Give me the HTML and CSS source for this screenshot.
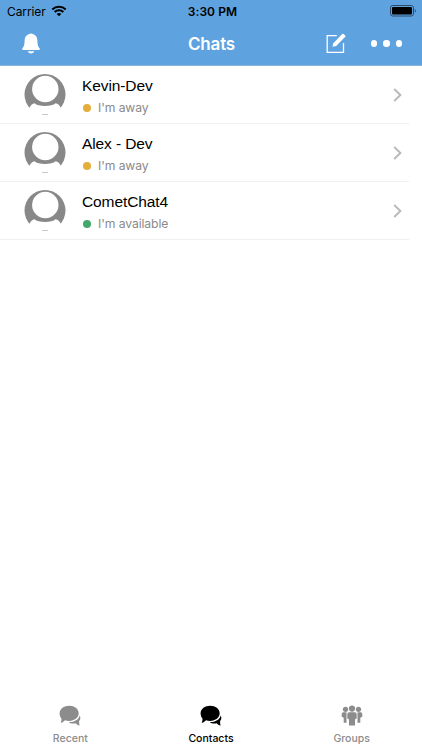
FILE: index.html
```
<!DOCTYPE html>
<html lang="en">
  <head>
    <meta charset="utf-8">
    <title>Chats</title>
    <link rel="stylesheet" href="styles.css">
  </head>
  <body>
    <!-- shared icons -->
    <svg class="defs" width="0" height="0">
      <symbol id="avatar" viewBox="0 0 42 42">
        <circle cx="21" cy="20.5" r="20.5" fill="#888" />
        <circle cx="21.3" cy="15" r="13.2" fill="#fff" />
        <path d="M0 42 L5.2 34.2 C6.5 31.500 8.500 29.500 10.500 29.300 C14 32.800 28 32.800 31.500 29.300 C34 29.500 35.800 31.500 37 34.200 L42 42Z" fill="#fff" />
        <path d="M18 40.500h6" stroke="#bbb" stroke-width=".8" />
      </symbol>
      <symbol id="arrow" viewBox="0 0 10 14">
        <path d="M1.200 1 L7.400 7 L1.200 13" fill="none" stroke="#b9b9bd" stroke-width="1.900" />
      </symbol>
      <symbol id="bubbles" viewBox="0 0 22 21">
        <path d="M10.200.8C15.400.8 19.700 3.900 19.700 8.300s-4.300 7.600-9.500 7.600c-1.600 0-3-.2-4.200-.6-1 1.200-2.200 2.200-4.300 2.600.6-1.300.9-2.700.8-4.400C1.300 12.200.6 10.400.6 8.300.6 3.900 5 .8 10.200.8z" />
        <path d="M20.700 10.400c.6.900.7 1.800.6 2.800-.1 1.300-.6 2.200-1.200 2.900-.1 1.700.1 3.200.5 4.500-1.800-.4-3-1.200-3.900-2.300-3 .5-5.400.1-7-1.300 5.200.3 10-2.300 11-6.600z" />
      </symbol>
    </svg>

    <header>
      <div class="status">
        <div class="carrier">
          <span>Carrier</span>
          <svg width="16" height="12" viewBox="0 0 16 12">
            <path d="M1.300 4.500C5 .9 11 .9 14.700 4.500M3.700 7c2.400-2.300 6.200-2.300 8.600 0" fill="none" stroke="#000" stroke-width="2.100" />
            <path d="M8 11.200 L5.700 8.900 C7 7.800 9 7.800 10.300 8.900Z" />
          </svg>
        </div>
        <div class="time">3:30 PM</div>
        <svg class="battery" width="27" height="12" viewBox="0 0 27 12">
          <rect x=".5" y=".5" width="23" height="10.500" rx="2.200" fill="none" stroke="#2c4a68" />
          <rect x="2" y="2" width="20" height="7.500" rx="1" />
          <path d="M24.800 4v3.600c1.400-.4 1.400-3.200 0-3.600z" fill="#2c4a68" />
        </svg>
      </div>
      <div class="navbar">
        <svg class="bell" width="20" height="22" viewBox="0 0 20 22">
          <path d="M10 .5c.8 0 1.500.2 1.800.6 3.200.9 4.500 3.300 4.600 6.400.1 4.800.8 6.200 2.200 7.800.6.700.3 1.700-.8 1.700H2.200c-1.100 0-1.400-1-.8-1.700 1.400-1.600 2.100-3 2.200-7.800C3.700 4.400 5 2 8.200 1.100 8.500.7 9.200.5 10 .5zM6.800 18.300h6.400c-.4 1.300-1.600 2.200-3.200 2.200S7.200 19.600 6.800 18.300z" fill="#fff" />
        </svg>
        <h1>Chats</h1>
        <div class="actions">
          <svg width="20" height="21" viewBox="0 0 20 21">
            <path d="M10.800 2.700H1.200v16.600h16.300V10" fill="none" stroke="#fff" stroke-width="1.300" />
            <path d="M7.100 10.500 L14.800 2.500 L16.200 1.100 Q16.900.5 17.600 1.100 L19.200 2.600 Q19.800 3.300 19.200 4 L17.500 5.600 L10.200 12.900 L6.500 13.800Z" fill="#fff" />
          </svg>
          <div class="dots"><i></i><i></i><i></i></div>
        </div>
      </div>
    </header>

    <main>
      <div class="contact">
        <svg class="avatar"><use href="#avatar" /></svg>
        <div class="info">
          <div class="name">Kevin-Dev</div>
          <div class="state"><span class="dot away"></span>I'm away</div>
        </div>
        <svg class="arrow"><use href="#arrow" /></svg>
      </div>
      <div class="contact">
        <svg class="avatar"><use href="#avatar" /></svg>
        <div class="info">
          <div class="name">Alex - Dev</div>
          <div class="state"><span class="dot away"></span>I'm away</div>
        </div>
        <svg class="arrow"><use href="#arrow" /></svg>
      </div>
      <div class="contact">
        <svg class="avatar"><use href="#avatar" /></svg>
        <div class="info">
          <div class="name">CometChat4</div>
          <div class="state"><span class="dot available"></span>I'm available</div>
        </div>
        <svg class="arrow"><use href="#arrow" /></svg>
      </div>
    </main>

    <nav>
      <div class="tab">
        <svg width="22" height="21"><use href="#bubbles" /></svg>
        <span>Recent</span>
      </div>
      <div class="tab active">
        <svg width="22" height="21"><use href="#bubbles" /></svg>
        <span>Contacts</span>
      </div>
      <div class="tab">
        <svg width="22" height="21" viewBox="0 0 22 21">
          <circle cx="4.500" cy="4.300" r="2.600" />
          <circle cx="17.500" cy="4.300" r="2.600" />
          <path d="M2.300 7.300h3.200v10.500H2.700v-5L.7 11.800V9Q.7 7.300 2.300 7.300zM19.700 7.300h-3.200v10.500h2.800v-5l2-1V9Q21.300 7.300 19.700 7.300z" />
          <circle cx="11" cy="3.600" r="3.100" />
          <path d="M8.300 7.200h5.400q2 0 2 2v4.400l-1.700.6V20.500H8v-6.300l-1.700-.6V9.200q0-2 2-2z" />
        </svg>
        <span>Groups</span>
      </div>
    </nav>
  </body>
</html>
```
FILE: styles.css
```
body {
  margin: 0;
  height: 750px;
  display: flex;
  flex-direction: column;
  background-color: #fff;
  font-family: Inter, "Liberation Sans", sans-serif;
  overflow: hidden;
}

.defs {
  position: absolute;
}

header {
  height: 66px;
  background-color: #5ea2df;
  box-sizing: border-box;
  border-bottom: 1px solid #8cb4d8;
}

.status {
  display: grid;
  grid-template-columns: 1fr auto 1fr;
  align-items: center;
  height: 22px;
  padding: 0 5px 0 7px;
  font-size: 12px;
  color: #000;
}

.carrier {
  display: flex;
  align-items: center;
  gap: 5px;
  letter-spacing: -0.1px;
}

.time {
  font-weight: 600;
  letter-spacing: 0.1px;
  padding-left: 1px;
}

.battery {
  justify-self: end;
}

.navbar {
  display: grid;
  grid-template-columns: 1fr auto 1fr;
  align-items: center;
  height: 43px;
  padding: 0 20px 0 21px;
}

h1 {
  margin: 0;
  font-size: 17px;
  font-weight: 600;
  letter-spacing: -0.2px;
  color: #fff;
}

.actions {
  display: flex;
  align-items: center;
  justify-content: flex-end;
  gap: 25px;
}

.dots {
  display: flex;
  gap: 6px;
}

.dots i {
  width: 6.3px;
  height: 6.3px;
  border-radius: 50%;
  background-color: #fff;
}

main {
  flex: 1;
}

.contact {
  display: flex;
  align-items: center;
  box-sizing: border-box;
  width: 409px;
  height: 58px;
  padding: 0 6.5px 0 24px;
  border-bottom: 1px solid #f0f0f0;
}

.avatar {
  width: 42px;
  height: 42px;
}

.info {
  flex: 1;
  margin-left: 16px;
  padding-top: 4px;
}

.name {
  font-family: "Liberation Sans", Arial, sans-serif;
  font-size: 15.5px;
  line-height: 22px;
  letter-spacing: -0.1px;
  color: #000;
}

.state {
  display: flex;
  align-items: center;
  font-size: 12.2px;
  line-height: 22px;
  letter-spacing: -0.1px;
  color: #8a8a8a;
}

.dot {
  width: 8px;
  height: 8px;
  margin: 0 7px 0 1px;
  border-radius: 50%;
}

.away {
  background-color: #e3ae3c;
}

.available {
  background-color: #41a86b;
}

.arrow {
  width: 10px;
  height: 14px;
}

nav {
  display: grid;
  grid-template-columns: repeat(3, 1fr);
  height: 45px;
}

.tab {
  display: flex;
  flex-direction: column;
  align-items: center;
  font-size: 10.5px;
  font-weight: 500;
  color: #8c8c8c;
  fill: #8c8c8c;
}

.tab span {
  margin-top: 6px;
  line-height: 14px;
}

.active {
  color: #000;
  fill: #000;
}
```
